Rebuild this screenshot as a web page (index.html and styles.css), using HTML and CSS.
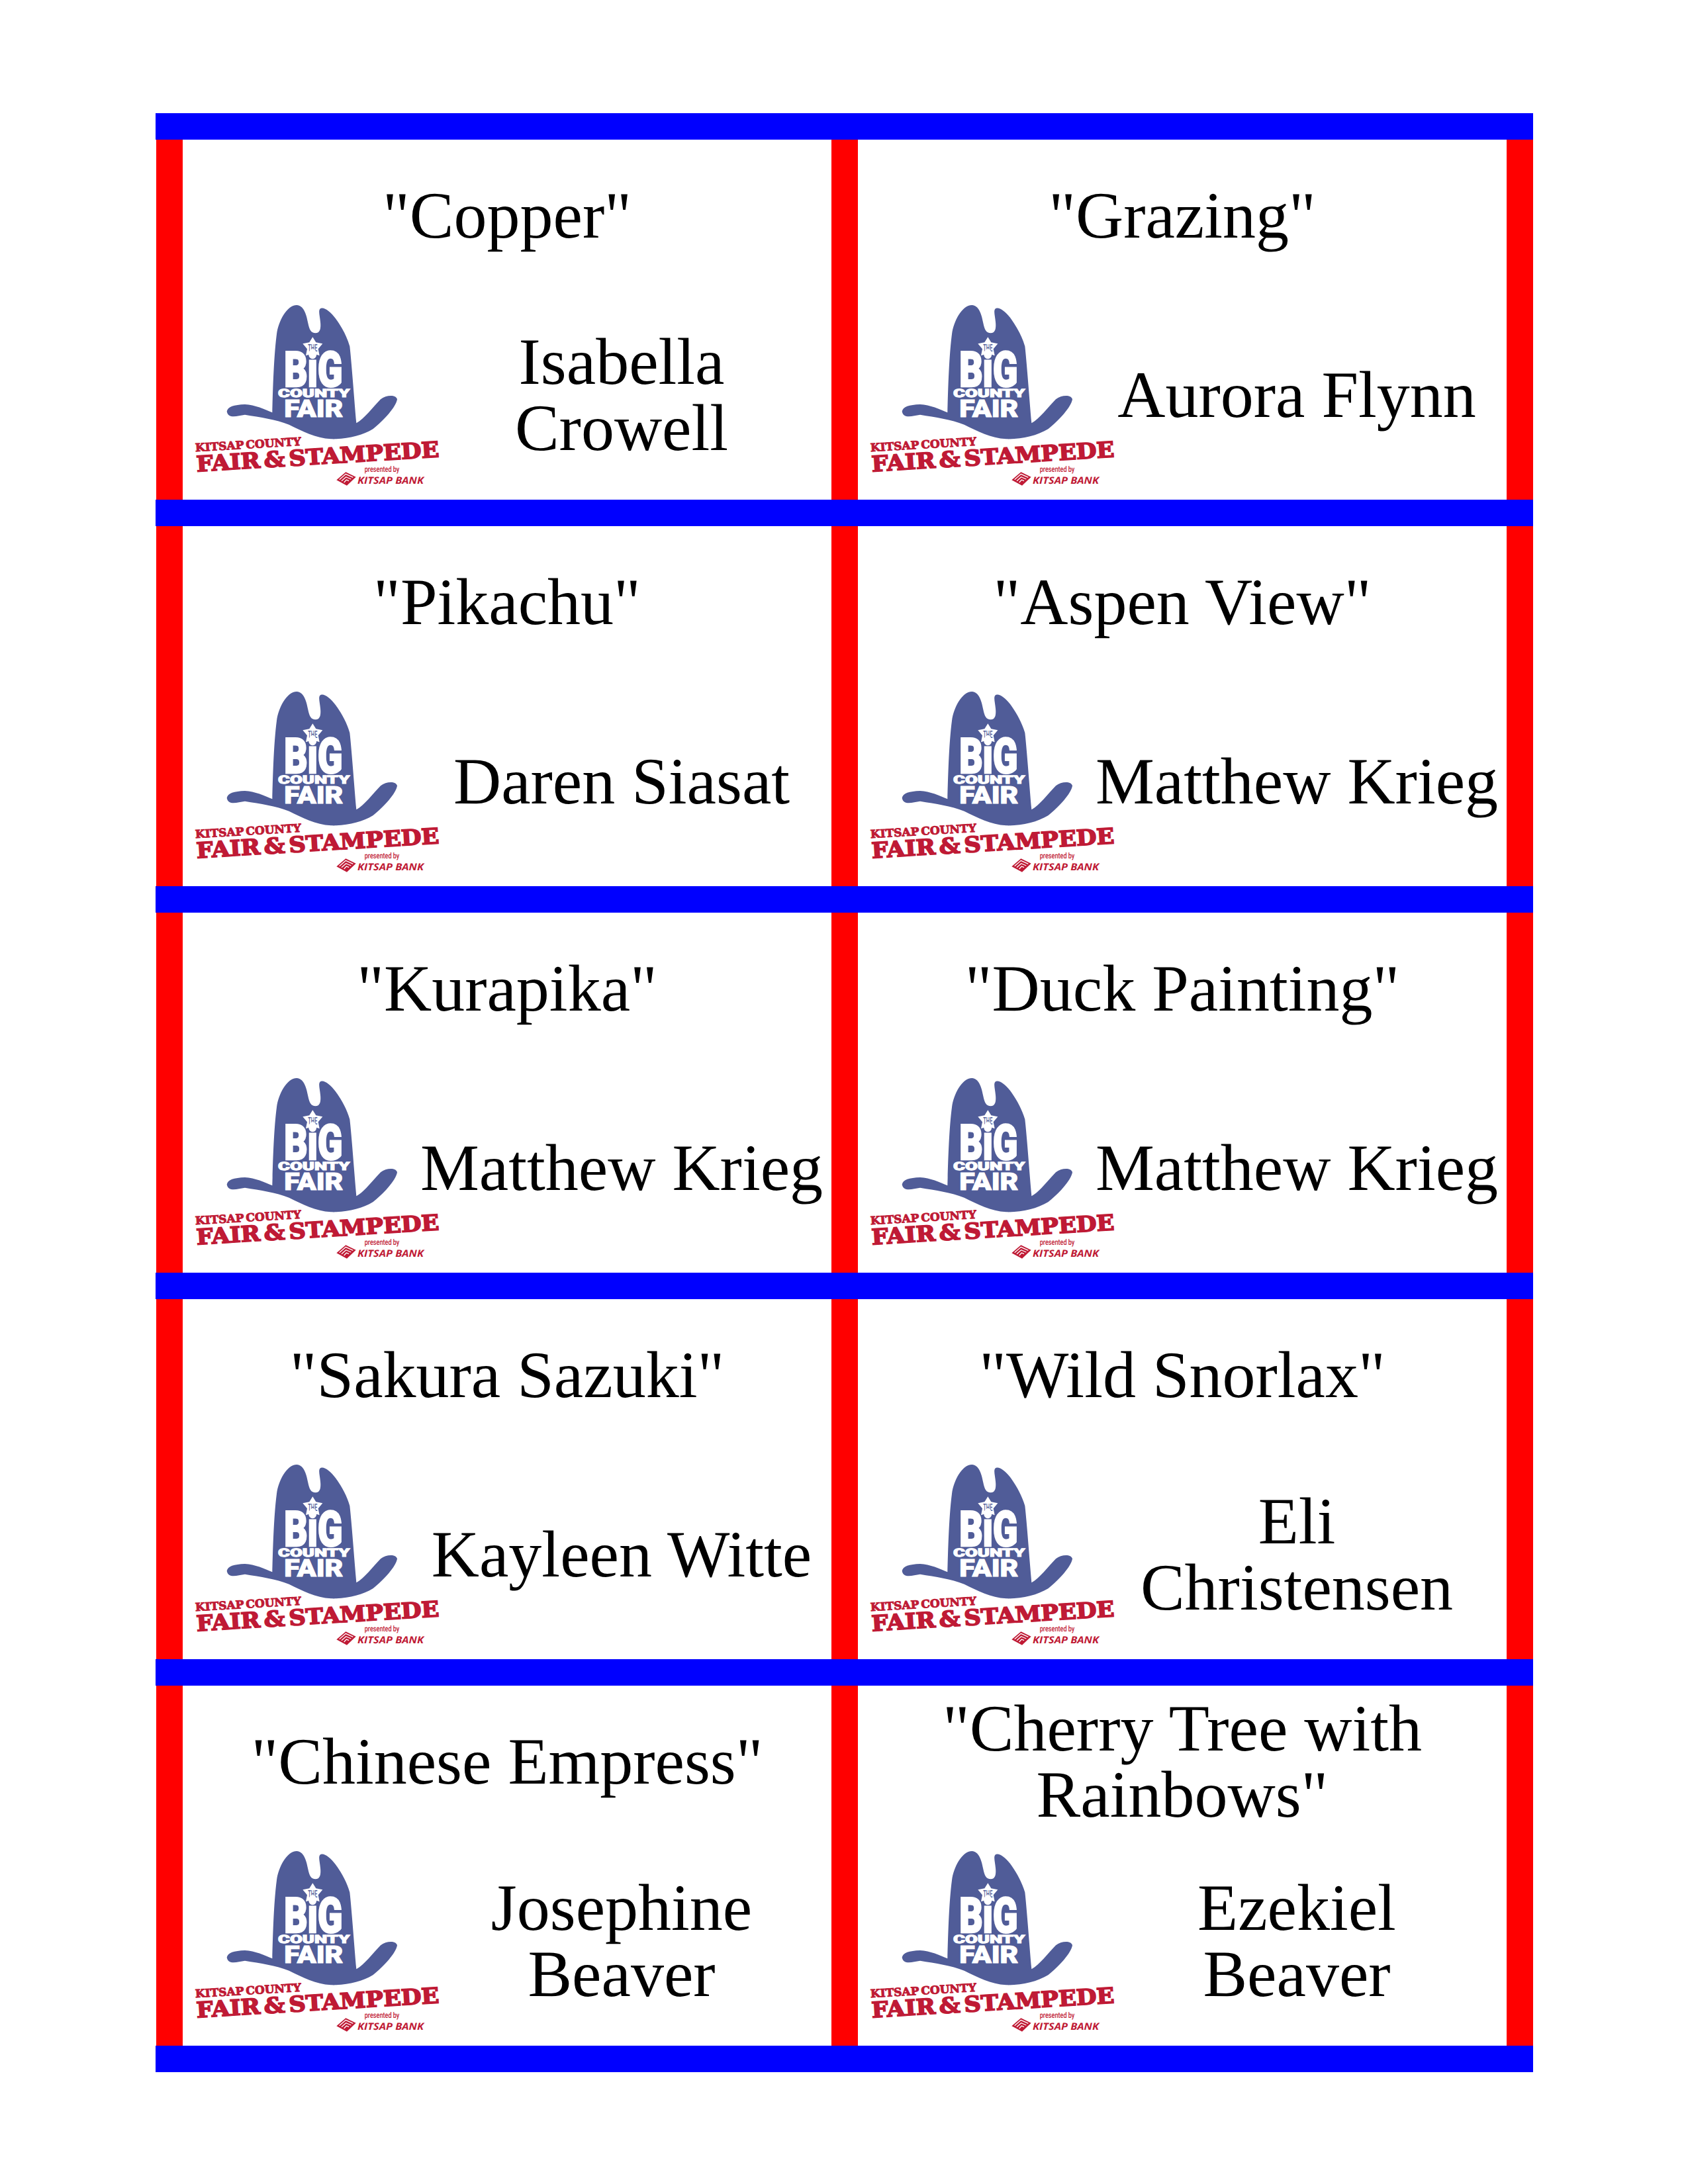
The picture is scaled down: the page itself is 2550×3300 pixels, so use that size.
FILE: index.html
```html
<!DOCTYPE html>
<html lang="en">
<head>
    <meta charset="UTF-8">
    <title>Entry labels</title>
    <link rel="stylesheet" href="styles.css">
</head>
<body>

<svg class="logo-defs" aria-hidden="true">
    <symbol id="fair-logo" viewBox="60 90 1140 840">
        <path class="hat" d="M218 575 C222 553 250 545 300 543 C345 545 390 565 424 580 C426 500 430 330 444 225 C452 165 490 93 535 93 C565 95 578 130 586 175 C592 205 600 220 620 220 C640 220 645 200 642 170 C640 145 632 120 640 110 C655 98 685 120 712 155 C740 195 762 235 775 280 C785 370 795 520 805 628 C840 610 880 555 915 520 C940 500 985 498 990 520 C985 555 930 615 880 655 C830 685 760 702 690 700 C620 695 560 665 500 635 C440 610 370 602 300 590 C265 595 225 610 218 575 Z"/>
        <polygon class="star" points="607,238 622,262 652,268 632,292 638,322 607,312 576,322 582,292 562,268 592,262"/>
        <text class="hat-small" x="586" y="304" textLength="42" lengthAdjust="spacingAndGlyphs">THE</text>
        <text class="hat-big" x="478" y="461" textLength="264" lengthAdjust="spacingAndGlyphs">BiG</text>
        <text class="hat-county" x="450" y="509" textLength="325" lengthAdjust="spacingAndGlyphs">COUNTY</text>
        <text class="hat-fair" x="478" y="599" textLength="267" lengthAdjust="spacingAndGlyphs">FAIR</text>
        <text class="kitsap" transform="translate(76 757) rotate(-3.4)" textLength="480" lengthAdjust="spacingAndGlyphs">KITSAP COUNTY</text>
        <text class="stampede" transform="translate(82 848) rotate(-3.5)" textLength="1102" lengthAdjust="spacingAndGlyphs">FAIR &amp; STAMPEDE</text>
        <text class="presented" x="842" y="848" textLength="158" lengthAdjust="spacingAndGlyphs">presented by</text>
        <path class="bank-mark" d="M715 886 L757 850 L803 872 L762 911 Z"/>
        <path class="bank-lines" d="M728 884 L757 859 L790 874 M738 890 L758 872 L781 882 M749 897 L760 885 L771 890"/>
        <text class="bank-name" x="810" y="902" textLength="300" lengthAdjust="spacingAndGlyphs">KITSAP BANK</text>
    </symbol>
</svg>

<div class="sheet">
    <div class="row">
        <div class="card">
            <div class="title">"Copper"</div>
            <div class="lower">
                <svg class="logo"><use href="#fair-logo"/></svg>
                <div class="name">Isabella Crowell</div>
            </div>
        </div>
        <div class="card">
            <div class="title">"Grazing"</div>
            <div class="lower">
                <svg class="logo"><use href="#fair-logo"/></svg>
                <div class="name">Aurora Flynn</div>
            </div>
        </div>
    </div>
    <div class="row">
        <div class="card">
            <div class="title">"Pikachu"</div>
            <div class="lower">
                <svg class="logo"><use href="#fair-logo"/></svg>
                <div class="name">Daren Siasat</div>
            </div>
        </div>
        <div class="card">
            <div class="title">"Aspen View"</div>
            <div class="lower">
                <svg class="logo"><use href="#fair-logo"/></svg>
                <div class="name">Matthew Krieg</div>
            </div>
        </div>
    </div>
    <div class="row">
        <div class="card">
            <div class="title">"Kurapika"</div>
            <div class="lower">
                <svg class="logo"><use href="#fair-logo"/></svg>
                <div class="name">Matthew Krieg</div>
            </div>
        </div>
        <div class="card">
            <div class="title">"Duck Painting"</div>
            <div class="lower">
                <svg class="logo"><use href="#fair-logo"/></svg>
                <div class="name">Matthew Krieg</div>
            </div>
        </div>
    </div>
    <div class="row">
        <div class="card">
            <div class="title">"Sakura Sazuki"</div>
            <div class="lower">
                <svg class="logo"><use href="#fair-logo"/></svg>
                <div class="name">Kayleen Witte</div>
            </div>
        </div>
        <div class="card">
            <div class="title">"Wild Snorlax"</div>
            <div class="lower">
                <svg class="logo"><use href="#fair-logo"/></svg>
                <div class="name">Eli Christensen</div>
            </div>
        </div>
    </div>
    <div class="row">
        <div class="card">
            <div class="title">"Chinese Empress"</div>
            <div class="lower">
                <svg class="logo"><use href="#fair-logo"/></svg>
                <div class="name">Josephine Beaver</div>
            </div>
        </div>
        <div class="card">
            <div class="title">"Cherry Tree with Rainbows"</div>
            <div class="lower">
                <svg class="logo"><use href="#fair-logo"/></svg>
                <div class="name">Ezekiel<br>Beaver</div>
            </div>
        </div>
    </div>
</div>

</body>
</html>
```

FILE: styles.css
```css
body {
    margin: 0;
    background-color: #fff;
    color: #000;
    font-family: "Liberation Serif", "Times New Roman", serif;
    font-size: 100px;
    line-height: 100px;
    text-rendering: geometricPrecision;
}

.logo-defs {
    display: block;
    width: 0;
    height: 0;
}

.sheet {
    width: 2081px;
    margin: 171px 0 0 235px;
    border-bottom: 40px solid #00f;
}

.row {
    display: flex;
    padding-left: 1px;
    border-top: 40px solid #00f;
}

.card {
    width: 980px;
    height: 544px;
    border-left: 40px solid #f00;
}

.card:last-child {
    border-right: 40px solid #f00;
}

.title {
    height: 229px;
    display: flex;
    align-items: center;
    justify-content: center;
    text-align: center;
}

.lower {
    height: 314px;
    display: grid;
    grid-template-columns: 358px 610px;
    align-items: center;
}

.logo {
    display: block;
    width: 380px;
    height: 280px;
    margin: 5px 0 0 14px;
}

.name {
    text-align: center;
}

/* logo drawing */
.hat {
    fill: #505c98;
}

.star {
    fill: #fff;
}

.hat-small {
    fill: #505c98;
    font: 500 46px "Roboto", sans-serif;
}

.hat-big, .hat-fair, .hat-county {
    fill: #fff;
    stroke: #fff;
    font-family: "Roboto", sans-serif;
    font-weight: 900;
}

.hat-big {
    font-size: 222px;
    stroke-width: 8px;
}

.hat-fair {
    font-size: 110px;
    stroke-width: 3px;
}

.hat-county {
    font-size: 52px;
    stroke-width: 3px;
}

.kitsap, .stampede {
    fill: #bf1a35;
    stroke: #bf1a35;
    font-family: "DejaVu Serif", serif;
    font-weight: bold;
}

.kitsap {
    font-size: 50px;
    stroke-width: 3px;
    word-spacing: -8px;
}

.stampede {
    font-size: 98px;
    stroke-width: 5px;
    word-spacing: -18px;
}

.presented {
    fill: #bf1a35;
    font: 500 36px "Roboto", sans-serif;
}

.bank-mark {
    fill: #bf1a35;
}

.bank-lines {
    fill: none;
    stroke: #fff;
    stroke-width: 4px;
}

.bank-name {
    fill: #bf1a35;
    font: italic bold 44px "Open Sans", sans-serif;
}
```
